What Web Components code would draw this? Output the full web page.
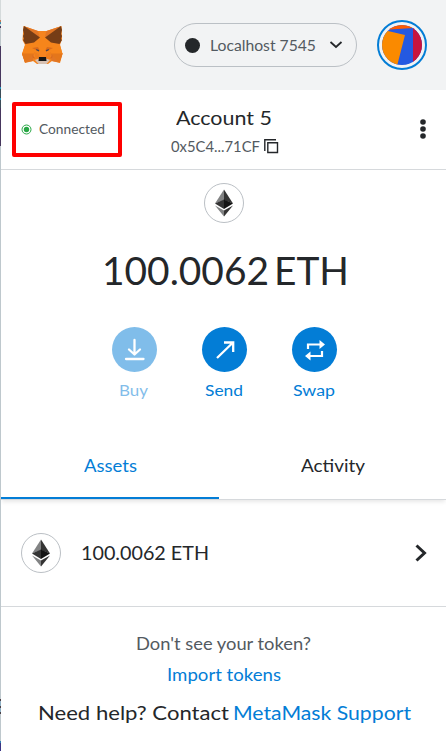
<!DOCTYPE html>
<html lang="en">
<head>
<meta charset="utf-8">
<title>MetaMask</title>
<style>
html,body{margin:0;background:#fff}
body{font-family:Lato,"Liberation Sans",sans-serif;color:#24272a}
</style>
</head>
<body>
<wallet-popup></wallet-popup>
<script>
// Text line stretched to a given measure, giving the wide letterforms of the wallet's typeface.
class FitText extends HTMLElement{
  connectedCallback(){
    const root=this.attachShadow({mode:'open'});
    root.innerHTML='<style>:host{display:block;white-space:nowrap;flex:none;height:var(--lh,20px);line-height:var(--lh,20px)}span{display:inline-block;transform-origin:0 50%}</style><span><slot></slot></span>';
    const w=+this.getAttribute('w');
    this.style.width=w+'px';
    const s=root.querySelector('span');
    s.style.transform='scaleX('+w/s.getBoundingClientRect().width+')';
  }
}
customElements.define('fit-text',FitText);

function define(name,html){
  const t=document.createElement('template');
  t.innerHTML=html;
  customElements.define(name,class extends HTMLElement{
    constructor(){super();this.attachShadow({mode:'open'}).append(t.content.cloneNode(true));}
  });
}

define('fox-logo',`<style>:host{display:block;width:42px;height:40px}svg{display:block}</style>
<svg width="42" height="40" viewBox="0 0 42 40">
<path fill="#f5841f" d="M2.500 1L17 6h8.500L40.500 1 41 14l-2 6 2.500 9-2.500 9-8-2-4 3H16l-4-3-8 2-3-9L4 20 1.500 15z"/>
<path fill="#e27625" d="M2.500 1L17 6l2 7zM40.500 1L25.500 6l-2 7zM1 28.500h12l-1 7.500-8 1.500zM41.500 28.500h-12l1 7.500 8 1.500z"/>
<path fill="#f6851b" d="M4 20l9-2 6-6h5l6 6 9 2 2.500 9H30L21.500 26 12 29H1z"/>
<path fill="#e4761b" d="M1 28.500h12L4 37.500zM41.500 28.500h-12l9 9z"/>
<path fill="#763d16" d="M3 1l16 11.500-6 5L4.500 19 2 15l1-1-1-3 1-2-1-4zM40 1L24 12.500l6 5 8.500 1.500 2.500-4-1-1 1-3-1-2 1-4z"/>
<path fill="#d96b1c" d="M11 23l6-1 2 4-4-1zM32 23l-6-1-2 4 4-1zM11 30l4 4-3-1zM32 30l-4 4 3-1z"/>
<path fill="#ee7d1c" d="M13 27l5 2v5l-3 1zM30 27l-5 2v5l3 1z"/>
<path fill="#4a4450" d="M15 24l3 1v1.500l-2.500-1zM28 24l-3 1v1.500l2.500-1z"/>
<path fill="#d7c1b3" d="M14 35l4-1.500h7L29 35l-3.500 4h-8z"/>
<path fill="#161616" d="M18 32h7l.5 4h-8z"/></svg>`);

define('eth-badge',`<style>:host{display:block;box-sizing:border-box;width:40px;height:40px;border:1px solid #bbc0c5;border-radius:50%;background:#fff}svg{display:block}</style>
<svg width="38" height="38" viewBox="0 0 38 38"><path fill="#828384" d="M19 5.500v10.500l-9 3.500z"/><path fill="#343434" d="M19 5.500l9 14-9-3.500z"/><path fill="#343434" d="M10 19.500l9-4V25z"/><path fill="#141414" d="M28 19.500l-9-4V25z"/><path fill="#828384" d="M10 21.500l9 5v6z"/><path fill="#343434" d="M28 21.500l-9 5v6z"/></svg>`);

define('network-pill',`<style>:host{box-sizing:border-box;width:183px;height:44px;border:1px solid #bbc0c5;border-radius:22px;display:flex;align-items:center;padding-left:10px;color:#535a61;font-size:15.500px}
i{width:15px;height:15px;border-radius:50%;background:#24272a;margin-right:10px}svg{margin-left:13px}</style>
<i></i><fit-text w="106">Localhost 7545</fit-text><svg width="14" height="10" viewBox="0 0 14 10"><path d="M1.500 2L7 7 12.500 2" fill="none" stroke="#24272a" stroke-width="1.800"/></svg>`);

define('account-avatar',`<style>:host{display:block;width:50px;height:50px}svg{display:block}</style>
<svg width="50" height="50" viewBox="0 0 50 50"><defs><clipPath id="c"><circle cx="25" cy="25" r="20"/></clipPath></defs><circle cx="25" cy="25" r="24" fill="#f2f3f4" stroke="#037dd6" stroke-width="2"/><g clip-path="url(#c)"><path fill="#2459e1" d="M0 0h50v50H0z"/><path fill="#fb5c03" d="M0 0h50v8L36 8 13 9.500 0 13z"/><path fill="#c8143e" d="M36 8h14v42H36z"/><path fill="#fa8a00" d="M0 8l11 3 17 4-9 35H0z"/></g></svg>`);

define('top-bar',`<style>:host{box-sizing:border-box;height:90px;background:#f2f3f4;display:flex;align-items:center;padding:0 19px 0 20px}
network-pill{margin-left:111px}account-avatar{margin-left:20px}</style>
<fox-logo></fox-logo><network-pill></network-pill><account-avatar></account-avatar>`);

define('account-bar',`<style>:host{box-sizing:border-box;height:80px;border-bottom:1px solid #d6d9dc;display:grid;grid-template-columns:120px 1fr 119px}
.box{box-sizing:border-box;width:110px;height:55px;margin:12px 0 0 11px;border:4px solid #fe0000;border-radius:2px;display:flex;align-items:center;padding-left:5px;color:#535a61;font-size:12.500px}
.box svg{margin-right:7px}
.mid{display:flex;flex-direction:column;align-items:center;padding-top:16px;--lh:23px;font-size:19px}
.adr{display:flex;align-items:center;font-size:15px;color:#535a61;margin-top:6px;gap:4px;padding-left:1px}
.more{justify-self:end;margin:29px 19px 0 0}</style>
<div class="box"><svg width="11" height="11" viewBox="0 0 11 11"><circle cx="5.500" cy="5.500" r="4.500" fill="none" stroke="#28a745"/><circle cx="5.500" cy="5.500" r="2.700" fill="#28a745"/></svg><fit-text w="66">Connected</fit-text></div>
<div class="mid"><fit-text w="96">Account 5</fit-text><div class="adr"><fit-text w="89">0x5C4...71CF</fit-text><svg width="15" height="15" viewBox="0 0 15 15"><path fill="none" stroke="#24272a" stroke-width="1.400" d="M.8 12V.8H12M3.800 3.800h9.700v9.700H3.800z"/></svg></div></div>
<svg class="more" width="8" height="20" viewBox="0 0 8 20" fill="#24272a"><circle cx="4" cy="3" r="2.800"/><circle cx="4" cy="10" r="2.800"/><circle cx="4" cy="17" r="2.800"/></svg>`);

define('action-button',`<style>:host{width:90px;display:flex;flex-direction:column;align-items:center;color:#037dd6;font-size:15.500px;gap:8px}:host([disabled]){opacity:.5}
div{width:45px;height:45px;border-radius:50%;background:#037dd6;display:grid;place-items:center}::slotted(fit-text){margin-right:2px}</style>
<div><slot name="icon"></slot></div><slot></slot>`);

define('wallet-overview',`<style>:host{box-sizing:border-box;height:264px;display:flex;flex-direction:column;align-items:center;padding-top:13px}
.bal{--lh:50px;font-size:39.500px;margin:22px 0 32px;padding-left:4px;display:flex;gap:5px}.row{display:flex;padding-left:2px}svg{display:block}</style>
<eth-badge></eth-badge><div class="bal"><fit-text w="167">100.0062</fit-text><fit-text w="75">ETH</fit-text></div>
<div class="row">
<action-button disabled><svg slot="icon" width="22" height="24" viewBox="0 0 22 24" fill="none" stroke="#fff" stroke-width="2.300" stroke-linecap="round" stroke-linejoin="round"><path d="M10.500 2v14.500M5 11.500l5.500 5 5.500-5M2 21h17.500"/></svg><fit-text w="29">Buy</fit-text></action-button>
<action-button><svg slot="icon" width="22" height="22" viewBox="0 0 22 22" fill="none" stroke="#fff" stroke-width="2.300"><path d="M3 19L18.500 4M10 3.500h9.200V13"/></svg><fit-text w="38">Send</fit-text></action-button>
<action-button><svg slot="icon" width="22" height="22" viewBox="0 0 22 22"><path d="M4 10V5.500h12M18 12v5H6" fill="none" stroke="#fff" stroke-width="2.200"/><path fill="#fff" d="M15.500 1l5.500 4.500-5.500 4.500zM6.500 12.500v9L1 17z"/></svg><fit-text w="42">Swap</fit-text></action-button>
</div>`);

define('tab-strip',`<style>:host{display:grid;grid-template-columns:218px 1fr;height:65px;border-bottom:1px solid #d6d9dc;box-shadow:0 3px 4px -1px #00000018;font-size:17.500px;--lh:24px}
div{box-sizing:border-box;display:flex;justify-content:center;padding-top:20px}.on{color:#037dd6;border-bottom:2px solid #037dd6}.off{padding-left:1px}</style>
<div class="on"><fit-text w="53">Assets</fit-text></div><div class="off"><fit-text w="64">Activity</fit-text></div>`);

define('asset-row',`<style>:host{box-sizing:border-box;height:107px;display:flex;align-items:center;border-bottom:1px solid #d6d9dc;padding:0 19px 0 20px;font-size:19.500px;--lh:24px}
fit-text{margin:0 0 0 20px}.go{margin-left:auto}</style>
<eth-badge></eth-badge><fit-text w="128">100.0062 ETH</fit-text><svg class="go" width="12" height="18" viewBox="0 0 12 18"><path d="M1.500 1.500L9.500 9l-8 7.500" fill="none" stroke="#24272a" stroke-width="3"/></svg>`);

define('help-footer',`<style>:host{display:flex;flex-direction:column;align-items:center;padding-top:25px;--lh:24px;font-size:17.500px}
.q{color:#535a61}.a{color:#037dd6}.q,.a{margin-bottom:7px}.h{display:flex;gap:4px;font-size:19.500px;margin-top:7px;padding-left:1px;color:#24272a}</style>
<fit-text class="q" w="175">Don't see your token?</fit-text><fit-text class="a" w="114">Import tokens</fit-text>
<div class="h"><fit-text w="191">Need help? Contact</fit-text><fit-text class="a" w="178">MetaMask Support</fit-text></div>`);

define('wallet-popup',`<style>:host{box-sizing:border-box;display:grid;grid-template-columns:1px 1fr;width:446px;height:751px;overflow:hidden;background:#fff}
.edge{background:linear-gradient(#d5dadb 0 20px,#c07a58 20px 22px,#3c91ad 22px 24px,#d5dadb 24px 26px,#46365d 26px 28px,#bdc6ca 28px 46px,#46365d 46px 87px,#1d92bb 87px 89px,#3c4c58 89px 98px,#1d92bb 98px 100px,#3c4c58 100px 108px,#46365d 108px 146px,#bec8cd 146px 699px,#4a4048 699px 701px,#8fb0c4 701px 706px,#4a4048 706px 708px,#8fb0c4 708px 712px,#4a4048 712px 714px,#bec8cd 714px 741px,#2e7fb0 741px 743px,#3a3584 743px)}
main{display:flex;flex-direction:column;min-width:0}tab-strip{clip-path:inset(0 0 -8px 0)}</style>
<div class="edge"></div><main><top-bar></top-bar><account-bar></account-bar><wallet-overview></wallet-overview><tab-strip></tab-strip><asset-row></asset-row><help-footer></help-footer></main>`);
</script>
</body>
</html>
